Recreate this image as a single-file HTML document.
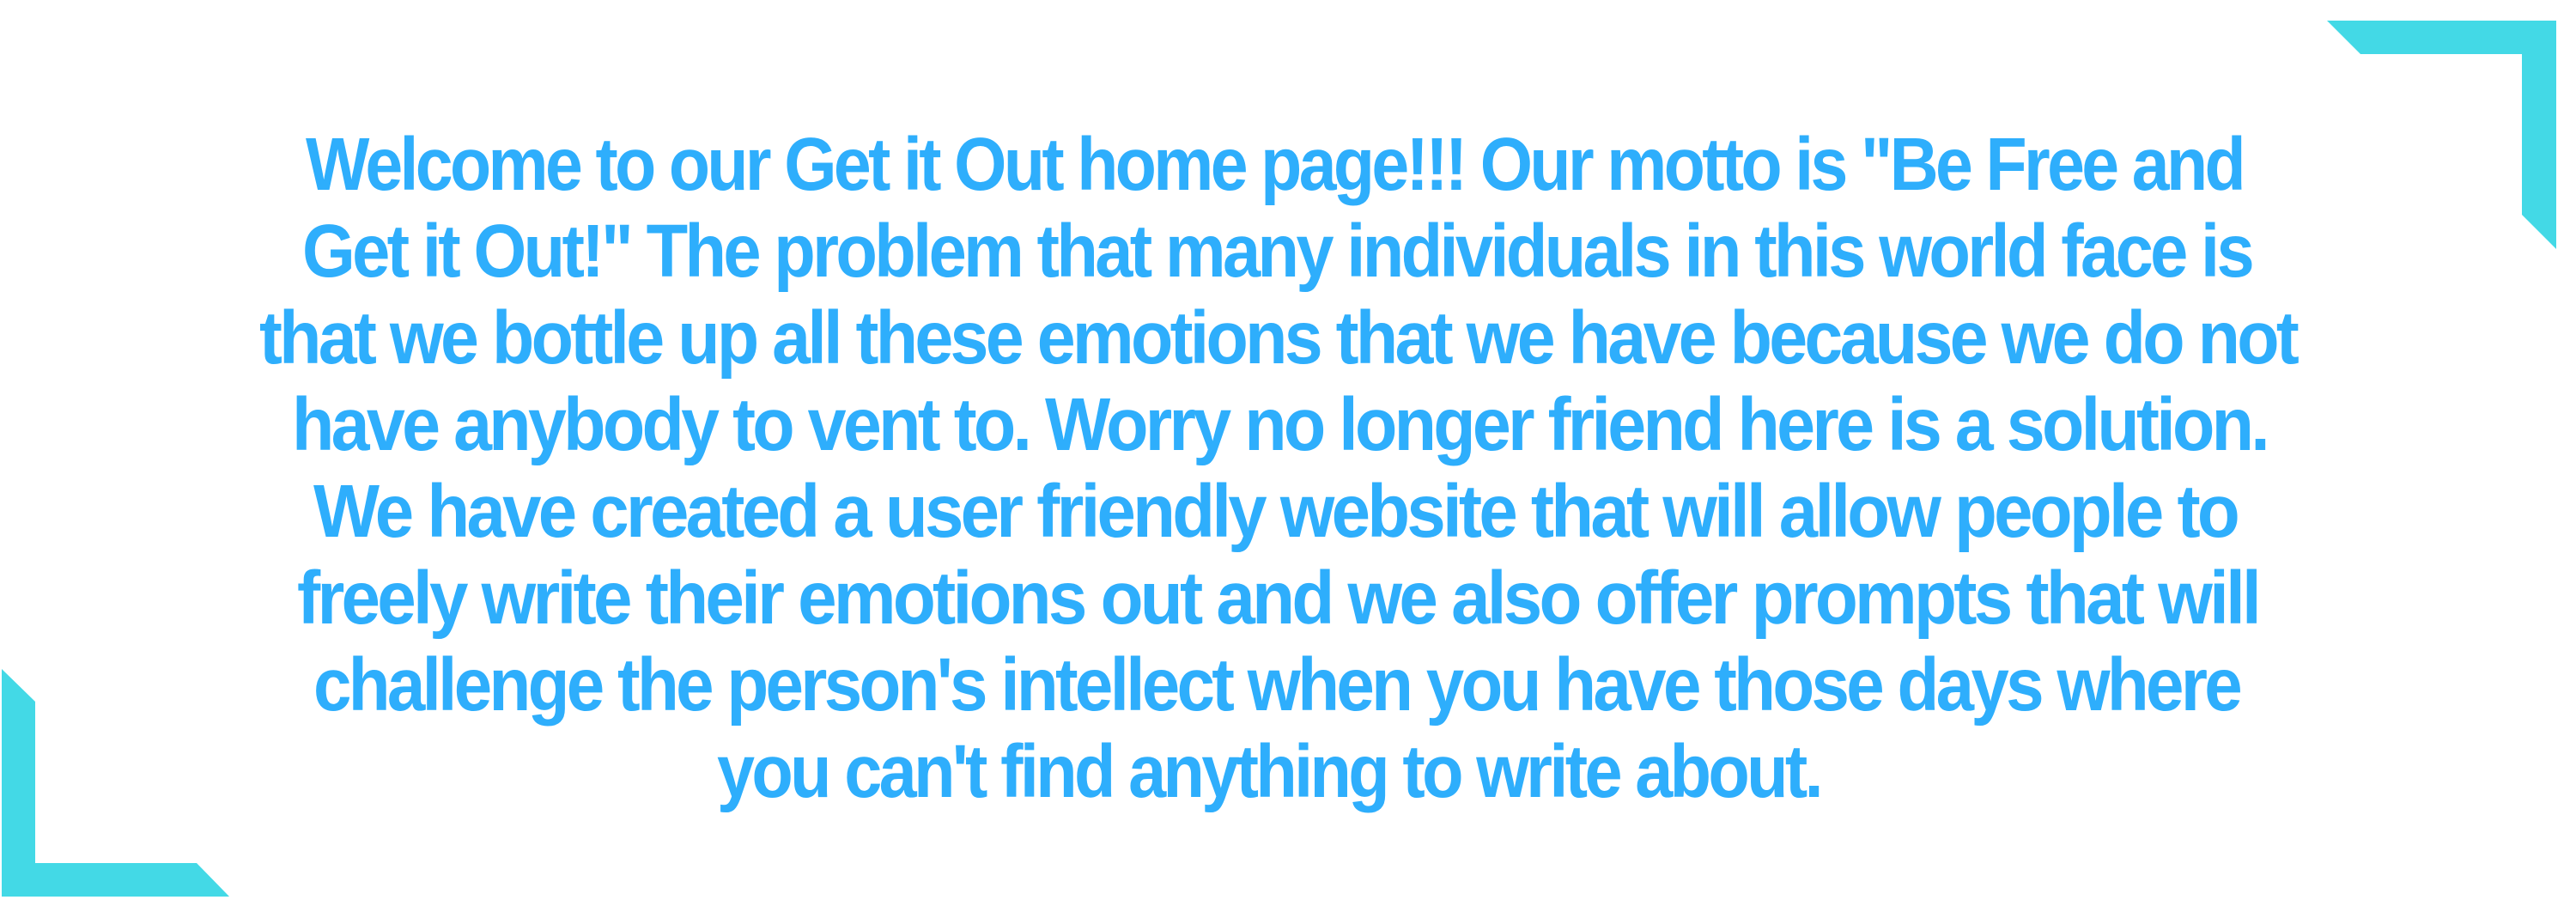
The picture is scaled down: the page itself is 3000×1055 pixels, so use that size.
<!DOCTYPE html>
<html><head><meta charset="utf-8"><style>
html,body{margin:0;padding:0;background:#fff;width:3000px;height:1055px;overflow:hidden;position:relative}
.t{position:absolute;left:0;width:3000px;top:141px;font-family:"Liberation Sans",sans-serif;font-weight:bold;font-size:87px;line-height:101px;color:#2eaefc;}
.l{height:101px;white-space:nowrap;position:relative}
.l span{position:absolute;top:0;left:0;transform-origin:0 0;letter-spacing:-4px}
svg{position:absolute;left:0;top:0}
</style></head><body>
<svg width="3000" height="1055">
<polygon fill="#43d9e6" points="2710,24 2977,24 2977,290 2937,250 2937,63 2749,63"/>
<polygon fill="#43d9e6" points="2,779 41,817 41,1005 229,1005 267,1044 2,1044"/>
</svg>
<div class="t">
<div class="l" data-x="356" data-w="2256"><span>Welcome to our Get it Out home page!!! Our motto is "Be Free and</span></div>
<div class="l" data-x="352" data-w="2270"><span>Get it Out!" The problem that many individuals in this world face is</span></div>
<div class="l" data-x="302" data-w="2372"><span>that we bottle up all these emotions that we have because we do not</span></div>
<div class="l" data-x="340" data-w="2300"><span>have anybody to vent to. Worry no longer friend here is a solution.</span></div>
<div class="l" data-x="365" data-w="2240"><span>We have created a user friendly website that will allow people to</span></div>
<div class="l" data-x="346" data-w="2284"><span>freely write their emotions out and we also offer prompts that will</span></div>
<div class="l" data-x="365" data-w="2243"><span>challenge the person's intellect when you have those days where</span></div>
<div class="l" data-x="835" data-w="1285"><span>you can't find anything to write about.</span></div>
</div>
<script>
document.querySelectorAll('.l').forEach(function(d){
var s=d.firstChild,w=s.getBoundingClientRect().width,tw=+d.dataset.w;
s.style.left=d.dataset.x+'px';s.style.transform='scaleX('+(tw/w)+')';});
</script>
</body></html>
